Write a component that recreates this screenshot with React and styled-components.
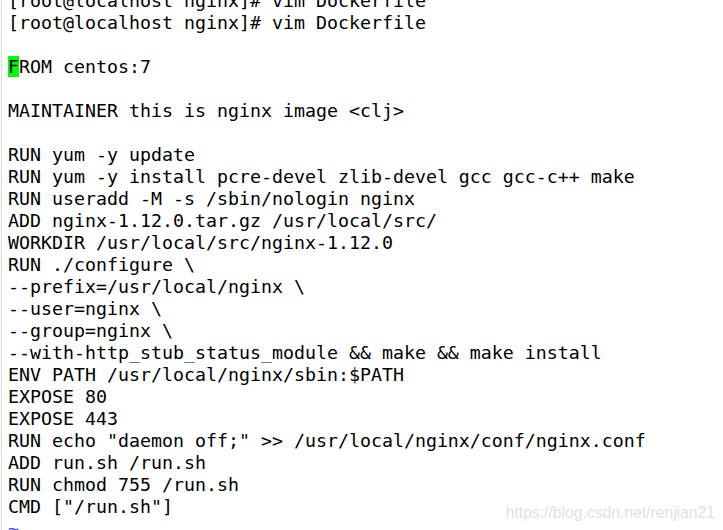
import React from "react";
import styled, { createGlobalStyle } from "styled-components";

const GlobalStyle = createGlobalStyle`
  html, body {
    margin: 0;
    padding: 0;
    background: #ffffff;
  }
`;

const Screen = styled.main`
  position: relative;
  width: 723px;
  height: 530px;
  overflow: hidden;
  background: #ffffff;
`;

const Terminal = styled.pre`
  margin: -10px 0 0 1px;
  padding-left: 6px;
  border-left: 1px solid #dcdcdc;
  font-family: "DejaVu Sans Mono", "Liberation Mono", monospace;
  font-size: 18.27px;
  line-height: 22px;
  color: #000000;
  white-space: pre;
`;

const Line = styled.div`
  height: 22px;
`;

const Cursor = styled.span`
  background: #00ff00;
  color: #000000;
`;

const Tilde = styled.span`
  color: #4a4aff;
`;

const Watermark = styled.span`
  position: absolute;
  right: 8px;
  bottom: 8px;
  font-family: "Liberation Sans", Arial, sans-serif;
  font-size: 15.7px;
  color: #e0e0e0;
`;

const lines = [
  "[root@localhost nginx]# vim Dockerfile",
  "[root@localhost nginx]# vim Dockerfile",
  "",
  null,
  "",
  "MAINTAINER this is nginx image <clj>",
  "",
  "RUN yum -y update",
  "RUN yum -y install pcre-devel zlib-devel gcc gcc-c++ make",
  "RUN useradd -M -s /sbin/nologin nginx",
  "ADD nginx-1.12.0.tar.gz /usr/local/src/",
  "WORKDIR /usr/local/src/nginx-1.12.0",
  "RUN ./configure \\",
  "--prefix=/usr/local/nginx \\",
  "--user=nginx \\",
  "--group=nginx \\",
  "--with-http_stub_status_module && make && make install",
  "ENV PATH /usr/local/nginx/sbin:$PATH",
  "EXPOSE 80",
  "EXPOSE 443",
  'RUN echo "daemon off;" >> /usr/local/nginx/conf/nginx.conf',
  "ADD run.sh /run.sh",
  "RUN chmod 755 /run.sh",
  'CMD ["/run.sh"]',
];

export default function App() {
  return (
    <>
      <GlobalStyle />
      <Screen>
        <Terminal>
          {lines.map((text, i) =>
            text === null ? (
              <Line key={i}>
                <Cursor>F</Cursor>ROM centos:7
              </Line>
            ) : (
              <Line key={i}>{text}</Line>
            )
          )}
          <Line>
            <Tilde>~</Tilde>
          </Line>
        </Terminal>
        <Watermark>https://blog.csdn.net/renjian21</Watermark>
      </Screen>
    </>
  );
}
